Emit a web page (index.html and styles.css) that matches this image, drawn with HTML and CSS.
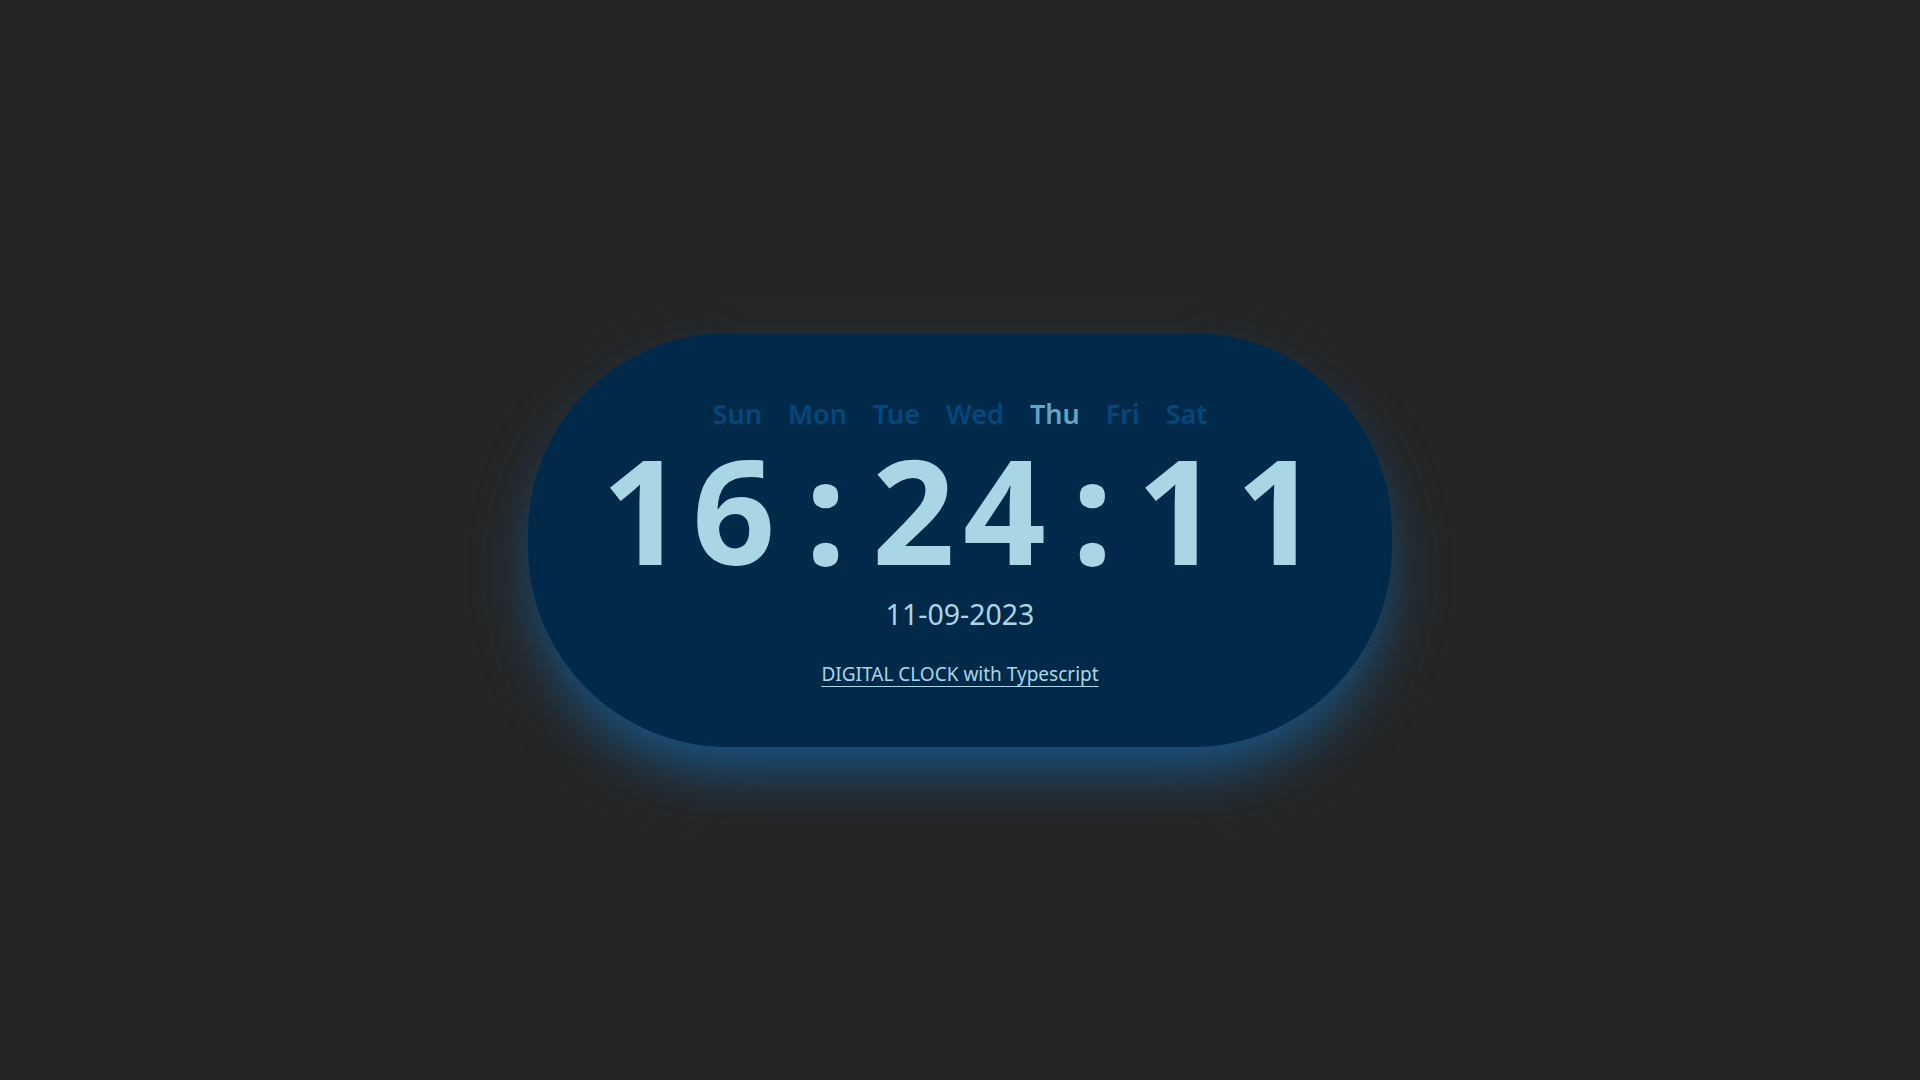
FILE: index.html
```html
<!DOCTYPE html>
<html lang="en">
<head>
<meta charset="utf-8">
<title>Digital Clock</title>
<link rel="stylesheet" href="styles.css">
</head>
<body>
<main class="clock">
  <div class="days">
    <span class="day">Sun</span>
    <span class="day">Mon</span>
    <span class="day">Tue</span>
    <span class="day">Wed</span>
    <span class="day active">Thu</span>
    <span class="day">Fri</span>
    <span class="day">Sat</span>
  </div>
  <div class="time">
    <span class="num">16</span><span class="colon">:</span><span class="num">24</span><span class="colon second">:</span><span class="num last">11</span>
  </div>
  <div class="date">11-09-2023</div>
  <a class="credit" href="#">DIGITAL CLOCK with Typescript</a>
</main>
</body>
</html>
```

FILE: styles.css
```css
html, body {
  margin: 0;
  padding: 0;
}

body {
  background: #252525;
  min-height: 100vh;
  display: flex;
  align-items: center;
  justify-content: center;
  font-family: "Noto Sans", "Open Sans", sans-serif;
}

.clock {
  box-sizing: border-box;
  width: 864px;
  height: 414px;
  padding-top: 63px;
  border-radius: 200px;
  background: #012a4a;
  box-shadow: 0 30px 60px -10px rgba(22, 92, 148, 0.95);
  display: flex;
  flex-direction: column;
  align-items: center;
}

.days {
  display: flex;
  gap: 26px;
  font-size: 27px;
  line-height: 36px;
  font-weight: 600;
  color: #01497c;
}

.day.active {
  color: #61a5c2;
}

.time {
  margin-top: 4px;
  display: flex;
  font-size: 145px;
  line-height: 145px;
  font-weight: 700;
  color: #a9d6e5;
}

.num {
  letter-spacing: 8px;
}

.num.last {
  letter-spacing: 16px;
  margin-right: -16px;
}

.colon {
  margin: 0 26px 0 22px;
}

.colon.second {
  margin: 0 24px 0 18px;
}

.date {
  margin-top: 15px;
  font-size: 28.5px;
  line-height: 36px;
  color: #a9d6e5;
}

.credit {
  margin-top: 28px;
  font-size: 19px;
  line-height: 28px;
  color: #a9d6e5;
  text-decoration: underline;
  text-underline-offset: 5px;
}
```
